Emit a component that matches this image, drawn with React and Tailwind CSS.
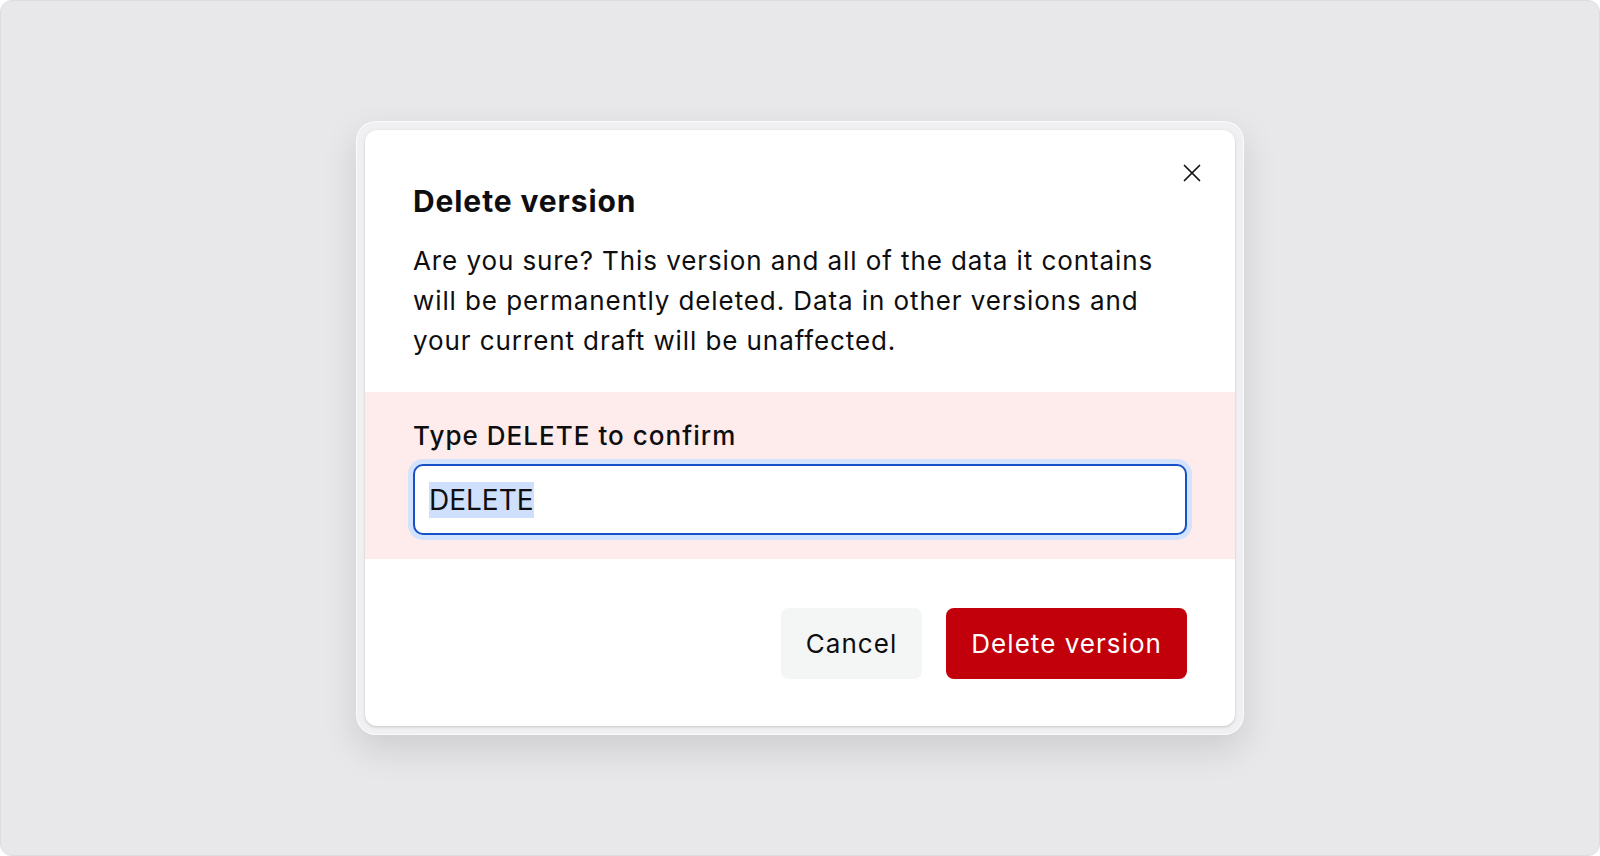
export default function App() {
  return (
    <div className="h-[856px] w-full bg-white font-['Inter','Noto_Sans',sans-serif] text-[#0e0e10]">
      <div className="flex h-full items-center justify-center rounded-[12px] border border-[#dcdde1] bg-[#e8e8eb]">
        <div className="rounded-[20px] border border-white/70 bg-[#f0f0f2] p-2 shadow-[0_14px_36px_rgba(0,0,0,0.12)]">
          <div className="relative w-[870px] overflow-hidden rounded-[12px] bg-white shadow-[0_1px_3px_rgba(0,0,0,0.18)]">
            <button className="absolute right-[34px] top-[34px] text-[#111]" aria-label="Close">
              <svg width="18" height="18" viewBox="0 0 18 18" fill="none" stroke="currentColor" strokeWidth="1.7" strokeLinecap="round">
                <path d="M1.5 1.5 16.5 16.5M16.5 1.5 1.5 16.5" />
              </svg>
            </button>

            <div className="px-12 pb-[31px] pt-[53px]">
              <h2 className="text-[30px] font-bold leading-[36px] tracking-[0.03em]">Delete version</h2>
              <p className="mt-[22px] text-[26px] leading-[40px] tracking-[0.035em]">
                Are you sure? This version and all of the data it contains will be permanently deleted. Data in other versions and your current draft will be unaffected.
              </p>
            </div>

            <div className="bg-[#feebeb] px-12 pb-6 pt-7">
              <label className="mb-3 block text-[26px] font-medium leading-8 tracking-[0.04em]">Type DELETE to confirm</label>
              <div className="flex h-[71px] items-center rounded-[10px] border-2 border-[#1550c6] bg-white pl-[14px] shadow-[0_0_0_5px_#d3e2fd]">
                <span className="bg-[#cfe0fc] text-[28px] leading-[36px]">DELETE</span>
              </div>
            </div>

            <div className="flex justify-end gap-6 px-12 pb-[47px] pt-[49px]">
              <button className="h-[71px] rounded-lg bg-[#f4f5f5] px-[25px] text-[26px] leading-none tracking-[0.04em]">Cancel</button>
              <button className="h-[71px] rounded-lg bg-[#c1000b] px-[25px] text-[26px] leading-none tracking-[0.04em] text-white">Delete version</button>
            </div>
          </div>
        </div>
      </div>
    </div>
  );
}
